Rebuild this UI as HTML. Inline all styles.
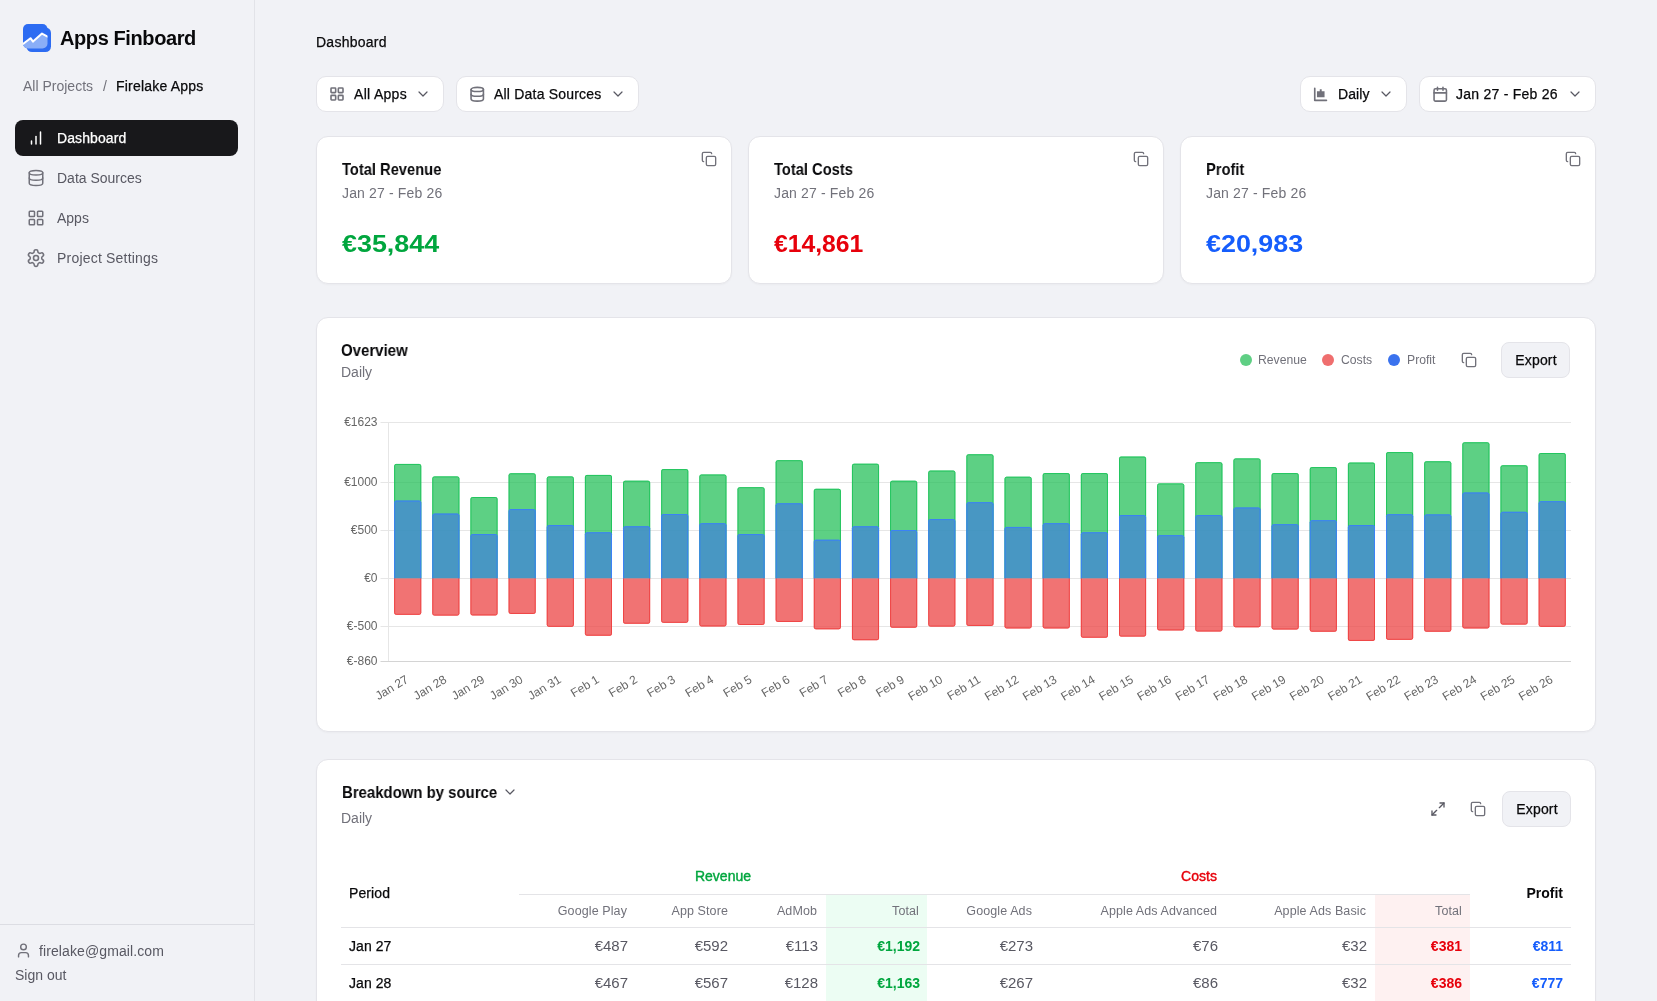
<!DOCTYPE html>
<html><head><meta charset="utf-8">
<style>
*{box-sizing:border-box;margin:0;padding:0}
html,body{width:1657px;height:1001px;overflow:hidden}
body{background:#f1f2f6;font-family:"Liberation Sans",sans-serif;color:#18181b;position:relative}
.t{position:absolute;white-space:nowrap;will-change:transform}
.side{position:absolute;left:0;top:0;width:255px;height:1001px;border-right:1px solid #e2e3e8}
.btn{position:absolute;top:76px;height:36px;background:#fff;border:1px solid #e4e4e9;border-radius:10px}
.card{position:absolute;background:#fff;border:1px solid #e4e4e9;border-radius:12px;box-shadow:0 1px 2px rgba(0,0,0,0.03)}
.chart{position:absolute;left:0;top:0;will-change:transform}
.tk{font-family:"Liberation Sans",sans-serif;font-size:12px;fill:#666}
.export{position:absolute;width:69px;height:36px;background:#f1f2f6;border:1px solid #e4e4e9;border-radius:8px}
</style></head><body>
<div class="side"></div>
<svg style="position:absolute;left:23px;top:24px" width="28" height="28" viewBox="0 0 28 28">
<defs><clipPath id="fc"><rect x="0" y="0" width="24.5" height="24.5" rx="5"/></clipPath></defs>
<rect x="3.5" y="3.5" width="24.5" height="24.5" rx="5.5" fill="#2d6cf2"/>
<rect x="0" y="0" width="24.5" height="24.5" rx="5" fill="#2d6cf2"/>
<path clip-path="url(#fc)" d="M-1,20.5 L7.5,14 L10,17.5 L19,9.5 L25,12.8 L25,26 L-1,26 Z" fill="#8aaef7"/>
<path clip-path="url(#fc)" d="M-1,20.8 L7.5,14.2 L10,17.6 L19,9.6 L25,12.9" fill="none" stroke="#fff" stroke-width="2" stroke-linejoin="round"/>
</svg>
<div class="t" style="top:28.37px;font-size:20px;line-height:20px;color:#09090b;font-weight:700;letter-spacing:-0.4px;left:59.50px">Apps Finboard</div>
<div class="t" style="top:78.95px;font-size:14px;line-height:14px;color:#71717a;font-weight:400;left:23.00px">All Projects</div>
<div class="t" style="top:78.95px;font-size:14px;line-height:14px;color:#71717a;font-weight:400;left:103.00px">/</div>
<div class="t" style="top:78.95px;font-size:14px;line-height:14px;color:#09090b;font-weight:400;letter-spacing:0.2px;-webkit-text-stroke:0.25px #09090b;left:115.50px">Firelake Apps</div>
<div style="position:absolute;left:15px;top:120px;width:223px;height:36px;border-radius:8px;background:#18181b"></div>
<svg style="position:absolute;left:27.00px;top:129.00px;color:#ffffff" width="18" height="18" viewBox="0 0 24 24" fill="none" stroke="currentColor" stroke-width="2" stroke-linecap="round" stroke-linejoin="round"><line x1="12" x2="12" y1="20" y2="10"/><line x1="18" x2="18" y1="20" y2="4"/><line x1="6" x2="6" y1="20" y2="16"/></svg>
<div class="t" style="top:130.55px;font-size:14px;line-height:14px;color:#ffffff;font-weight:400;letter-spacing:0.1px;-webkit-text-stroke:0.25px #ffffff;left:57.00px">Dashboard</div>
<svg style="position:absolute;left:26.90px;top:169.00px;color:#71717a" width="18" height="18" viewBox="0 0 24 24" fill="none" stroke="currentColor" stroke-width="2" stroke-linecap="round" stroke-linejoin="round"><ellipse cx="12" cy="5" rx="9" ry="3"/><path d="M3 5V19A9 3 0 0 0 21 19V5"/><path d="M3 12A9 3 0 0 0 21 12"/></svg>
<div class="t" style="top:171.15px;font-size:14px;line-height:14px;color:#585862;font-weight:400;left:57.00px">Data Sources</div>
<svg style="position:absolute;left:27.10px;top:209.00px;color:#71717a" width="18" height="18" viewBox="0 0 24 24" fill="none" stroke="currentColor" stroke-width="2" stroke-linecap="round" stroke-linejoin="round"><rect width="7" height="7" x="3" y="3" rx="1"/><rect width="7" height="7" x="14" y="3" rx="1"/><rect width="7" height="7" x="14" y="14" rx="1"/><rect width="7" height="7" x="3" y="14" rx="1"/></svg>
<div class="t" style="top:211.05px;font-size:14px;line-height:14px;color:#585862;font-weight:400;left:57.00px">Apps</div>
<svg style="position:absolute;left:26.00px;top:247.70px;color:#71717a" width="20" height="20" viewBox="0 0 24 24" fill="none" stroke="currentColor" stroke-width="1.9" stroke-linecap="round" stroke-linejoin="round"><path d="M12.22 2h-.44a2 2 0 0 0-2 2v.18a2 2 0 0 1-1 1.73l-.43.25a2 2 0 0 1-2 0l-.15-.08a2 2 0 0 0-2.73.73l-.22.38a2 2 0 0 0 .73 2.73l.15.1a2 2 0 0 1 1 1.72v.51a2 2 0 0 1-1 1.74l-.15.09a2 2 0 0 0-.73 2.73l.22.38a2 2 0 0 0 2.73.73l.15-.08a2 2 0 0 1 2 0l.43.25a2 2 0 0 1 1 1.73V20a2 2 0 0 0 2 2h.44a2 2 0 0 0 2-2v-.18a2 2 0 0 1 1-1.73l.43-.25a2 2 0 0 1 2 0l.15.08a2 2 0 0 0 2.73-.73l.22-.39a2 2 0 0 0-.73-2.73l-.15-.08a2 2 0 0 1-1-1.74v-.5a2 2 0 0 1 1-1.74l.15-.09a2 2 0 0 0 .73-2.73l-.22-.38a2 2 0 0 0-2.73-.73l-.15.08a2 2 0 0 1-2 0l-.43-.25a2 2 0 0 1-1-1.73V4a2 2 0 0 0-2-2z"/><circle cx="12" cy="12" r="3"/></svg>
<div class="t" style="top:251.15px;font-size:14px;line-height:14px;color:#585862;font-weight:400;letter-spacing:0.2px;left:57.00px">Project Settings</div>
<div style="position:absolute;left:0;top:924px;width:254px;height:1px;background:#dcdde3"></div>
<svg style="position:absolute;left:14.50px;top:942.30px;color:#71717a" width="17" height="17" viewBox="0 0 24 24" fill="none" stroke="currentColor" stroke-width="2" stroke-linecap="round" stroke-linejoin="round"><path d="M19 21v-2a4 4 0 0 0-4-4H9a4 4 0 0 0-4 4v2"/><circle cx="12" cy="7" r="4"/></svg>
<div class="t" style="top:944.15px;font-size:14px;line-height:14px;color:#585862;font-weight:400;letter-spacing:0.1px;left:39.00px">firelake@gmail.com</div>
<div class="t" style="top:968.15px;font-size:14px;line-height:14px;color:#585862;font-weight:400;left:15.00px">Sign out</div>
<div class="t" style="top:35.15px;font-size:14px;line-height:14px;color:#09090b;font-weight:400;letter-spacing:0.25px;-webkit-text-stroke:0.25px #09090b;left:316.00px">Dashboard</div>
<div class="btn" style="left:316px;width:128px"></div>
<svg style="position:absolute;left:329.00px;top:86.00px;color:#71717a" width="16" height="16" viewBox="0 0 24 24" fill="none" stroke="currentColor" stroke-width="2.4" stroke-linecap="round" stroke-linejoin="round"><rect width="7" height="7" x="3" y="3" rx="1"/><rect width="7" height="7" x="14" y="3" rx="1"/><rect width="7" height="7" x="14" y="14" rx="1"/><rect width="7" height="7" x="3" y="14" rx="1"/></svg>
<div class="t" style="top:87.05px;font-size:14px;line-height:14px;color:#09090b;font-weight:400;letter-spacing:0.3px;-webkit-text-stroke:0.25px #09090b;left:354.00px">All Apps</div>
<svg style="position:absolute;left:415.00px;top:86.00px;color:#585862" width="16" height="16" viewBox="0 0 24 24" fill="none" stroke="currentColor" stroke-width="1.8" stroke-linecap="round" stroke-linejoin="round"><path d="m6 9 6 6 6-6"/></svg>
<div class="btn" style="left:456px;width:183px"></div>
<svg style="position:absolute;left:468.75px;top:85.75px;color:#71717a" width="16.5" height="16.5" viewBox="0 0 24 24" fill="none" stroke="currentColor" stroke-width="2.3" stroke-linecap="round" stroke-linejoin="round"><ellipse cx="12" cy="5" rx="9" ry="3"/><path d="M3 5V19A9 3 0 0 0 21 19V5"/><path d="M3 12A9 3 0 0 0 21 12"/></svg>
<div class="t" style="top:87.05px;font-size:14px;line-height:14px;color:#09090b;font-weight:400;letter-spacing:0.2px;-webkit-text-stroke:0.25px #09090b;left:494.00px">All Data Sources</div>
<svg style="position:absolute;left:610.20px;top:86.00px;color:#585862" width="16" height="16" viewBox="0 0 24 24" fill="none" stroke="currentColor" stroke-width="1.8" stroke-linecap="round" stroke-linejoin="round"><path d="m6 9 6 6 6-6"/></svg>
<div class="btn" style="left:1300px;width:107px"></div>
<svg style="position:absolute;left:1312.25px;top:85.75px;color:#71717a" width="16.5" height="16.5" viewBox="0 0 24 24" fill="none" stroke="currentColor" stroke-width="2.3" stroke-linecap="round" stroke-linejoin="round"><path d="M4 3.2v17.8h17" stroke-width="2.4"/><path d="M7.2 7.8h4.1V4.7h2.8v3.1h4.15v8.6H7.2z" fill="currentColor" stroke="none"/></svg>
<div class="t" style="top:87.05px;font-size:14px;line-height:14px;color:#09090b;font-weight:400;letter-spacing:0.1px;-webkit-text-stroke:0.25px #09090b;left:1337.50px">Daily</div>
<svg style="position:absolute;left:1377.80px;top:86.00px;color:#585862" width="16" height="16" viewBox="0 0 24 24" fill="none" stroke="currentColor" stroke-width="1.8" stroke-linecap="round" stroke-linejoin="round"><path d="m6 9 6 6 6-6"/></svg>
<div class="btn" style="left:1419px;width:177px"></div>
<svg style="position:absolute;left:1431.75px;top:85.75px;color:#71717a" width="16.5" height="16.5" viewBox="0 0 24 24" fill="none" stroke="currentColor" stroke-width="2.3" stroke-linecap="round" stroke-linejoin="round"><rect width="18" height="18" x="3" y="4" rx="2"/><path d="M16 2v4"/><path d="M8 2v4"/><path d="M3 10h18"/></svg>
<div class="t" style="top:87.05px;font-size:14px;line-height:14px;color:#09090b;font-weight:400;letter-spacing:0.25px;-webkit-text-stroke:0.25px #09090b;left:1456.00px">Jan 27 - Feb 26</div>
<svg style="position:absolute;left:1566.90px;top:86.00px;color:#585862" width="16" height="16" viewBox="0 0 24 24" fill="none" stroke="currentColor" stroke-width="1.8" stroke-linecap="round" stroke-linejoin="round"><path d="m6 9 6 6 6-6"/></svg>
<div class="card" style="left:316px;top:136px;width:416px;height:148px"></div>
<div class="t" style="top:160.73px;font-size:16.5px;line-height:16.5px;color:#09090b;font-weight:700;transform:scaleX(0.89);transform-origin:0 0;left:341.50px">Total Revenue</div>
<div class="t" style="top:186.15px;font-size:14px;line-height:14px;color:#71717a;font-weight:400;letter-spacing:0.15px;left:341.50px">Jan 27 - Feb 26</div>
<div class="t" style="top:231.88px;font-size:24px;line-height:24px;color:#00a63e;font-weight:700;transform:scaleX(1.12);transform-origin:0 0;left:341.50px">€35,844</div>
<svg style="position:absolute;left:701.00px;top:151.00px;color:#71717a" width="16" height="16" viewBox="0 0 24 24" fill="none" stroke="currentColor" stroke-width="2" stroke-linecap="round" stroke-linejoin="round"><rect width="14" height="14" x="8" y="8" rx="2" ry="2"/><path d="M4 16c-1.1 0-2-.9-2-2V4c0-1.1.9-2 2-2h10c1.1 0 2 .9 2 2"/></svg>
<div class="card" style="left:748px;top:136px;width:416px;height:148px"></div>
<div class="t" style="top:160.73px;font-size:16.5px;line-height:16.5px;color:#09090b;font-weight:700;transform:scaleX(0.89);transform-origin:0 0;left:773.50px">Total Costs</div>
<div class="t" style="top:186.15px;font-size:14px;line-height:14px;color:#71717a;font-weight:400;letter-spacing:0.15px;left:773.50px">Jan 27 - Feb 26</div>
<div class="t" style="top:231.88px;font-size:24px;line-height:24px;color:#e7000b;font-weight:700;transform:scaleX(1.03);transform-origin:0 0;left:773.50px">€14,861</div>
<svg style="position:absolute;left:1133.00px;top:151.00px;color:#71717a" width="16" height="16" viewBox="0 0 24 24" fill="none" stroke="currentColor" stroke-width="2" stroke-linecap="round" stroke-linejoin="round"><rect width="14" height="14" x="8" y="8" rx="2" ry="2"/><path d="M4 16c-1.1 0-2-.9-2-2V4c0-1.1.9-2 2-2h10c1.1 0 2 .9 2 2"/></svg>
<div class="card" style="left:1180px;top:136px;width:416px;height:148px"></div>
<div class="t" style="top:160.73px;font-size:16.5px;line-height:16.5px;color:#09090b;font-weight:700;transform:scaleX(0.89);transform-origin:0 0;left:1205.50px">Profit</div>
<div class="t" style="top:186.15px;font-size:14px;line-height:14px;color:#71717a;font-weight:400;letter-spacing:0.15px;left:1205.50px">Jan 27 - Feb 26</div>
<div class="t" style="top:231.88px;font-size:24px;line-height:24px;color:#155dfc;font-weight:700;transform:scaleX(1.12);transform-origin:0 0;left:1205.50px">€20,983</div>
<svg style="position:absolute;left:1565.00px;top:151.00px;color:#71717a" width="16" height="16" viewBox="0 0 24 24" fill="none" stroke="currentColor" stroke-width="2" stroke-linecap="round" stroke-linejoin="round"><rect width="14" height="14" x="8" y="8" rx="2" ry="2"/><path d="M4 16c-1.1 0-2-.9-2-2V4c0-1.1.9-2 2-2h10c1.1 0 2 .9 2 2"/></svg>
<div class="card" style="left:316px;top:317px;width:1280px;height:415px"></div>
<div class="t" style="top:342.23px;font-size:16.5px;line-height:16.5px;color:#09090b;font-weight:700;transform:scaleX(0.91);transform-origin:0 0;left:341.00px">Overview</div>
<div class="t" style="top:364.95px;font-size:14px;line-height:14px;color:#71717a;font-weight:400;left:341.00px">Daily</div>
<div style="position:absolute;left:1239.9px;top:353.8px;width:12px;height:12px;border-radius:6px;background:#5fcf84"></div>
<div class="t" style="top:353.87px;font-size:12.2px;line-height:12.2px;color:#71717a;font-weight:400;left:1258.00px">Revenue</div>
<div style="position:absolute;left:1322.0px;top:353.8px;width:12px;height:12px;border-radius:6px;background:#ef6e6e"></div>
<div class="t" style="top:353.87px;font-size:12.2px;line-height:12.2px;color:#71717a;font-weight:400;left:1340.50px">Costs</div>
<div style="position:absolute;left:1387.9px;top:353.8px;width:12px;height:12px;border-radius:6px;background:#3a72ee"></div>
<div class="t" style="top:353.87px;font-size:12.2px;line-height:12.2px;color:#71717a;font-weight:400;left:1406.90px">Profit</div>
<svg style="position:absolute;left:1461.00px;top:351.80px;color:#71717a" width="16" height="16" viewBox="0 0 24 24" fill="none" stroke="currentColor" stroke-width="2" stroke-linecap="round" stroke-linejoin="round"><rect width="14" height="14" x="8" y="8" rx="2" ry="2"/><path d="M4 16c-1.1 0-2-.9-2-2V4c0-1.1.9-2 2-2h10c1.1 0 2 .9 2 2"/></svg>
<div class="export" style="left:1501px;top:342px"></div>
<div class="t" style="top:352.55px;font-size:14px;line-height:14px;color:#09090b;font-weight:400;letter-spacing:0.15px;-webkit-text-stroke:0.25px #09090b;left:1236.00px;width:600px;text-align:center">Export</div>
<div class="card" style="left:316px;top:759px;width:1280px;height:400px"></div>
<div class="t" style="top:783.93px;font-size:16.5px;line-height:16.5px;color:#09090b;font-weight:700;transform:scaleX(0.905);transform-origin:0 0;left:341.50px">Breakdown by source</div>
<svg style="position:absolute;left:502.00px;top:784.00px;color:#585862" width="16" height="16" viewBox="0 0 24 24" fill="none" stroke="currentColor" stroke-width="1.8" stroke-linecap="round" stroke-linejoin="round"><path d="m6 9 6 6 6-6"/></svg>
<div class="t" style="top:810.85px;font-size:14px;line-height:14px;color:#71717a;font-weight:400;left:341.00px">Daily</div>
<svg style="position:absolute;left:1430.20px;top:800.70px;color:#585862" width="16" height="16" viewBox="0 0 24 24" fill="none" stroke="currentColor" stroke-width="2" stroke-linecap="round" stroke-linejoin="round"><polyline points="15 3 21 3 21 9"/><polyline points="9 21 3 21 3 15"/><line x1="21" x2="14" y1="3" y2="10"/><line x1="3" x2="10" y1="21" y2="14"/></svg>
<svg style="position:absolute;left:1470.00px;top:801.00px;color:#71717a" width="16" height="16" viewBox="0 0 24 24" fill="none" stroke="currentColor" stroke-width="2" stroke-linecap="round" stroke-linejoin="round"><rect width="14" height="14" x="8" y="8" rx="2" ry="2"/><path d="M4 16c-1.1 0-2-.9-2-2V4c0-1.1.9-2 2-2h10c1.1 0 2 .9 2 2"/></svg>
<div class="export" style="left:1502px;top:791px"></div>
<div class="t" style="top:801.95px;font-size:14px;line-height:14px;color:#09090b;font-weight:400;letter-spacing:0.15px;-webkit-text-stroke:0.25px #09090b;left:1236.50px;width:600px;text-align:center">Export</div>
<div style="position:absolute;left:826px;top:894px;width:101px;height:120px;background:#ecfdf3"></div>
<div style="position:absolute;left:1375px;top:894px;width:95px;height:120px;background:#fef1f1"></div>
<div style="position:absolute;left:519px;top:894px;width:951px;height:1px;background:#e4e4e7"></div>
<div style="position:absolute;left:341px;top:927px;width:1230px;height:1px;background:#e4e4e7"></div>
<div style="position:absolute;left:341px;top:964px;width:1230px;height:1px;background:#e4e4e7"></div>
<div class="t" style="top:869.25px;font-size:14px;line-height:14px;color:#00a63e;font-weight:400;-webkit-text-stroke:0.4px #00a63e;left:423.30px;width:600px;text-align:center">Revenue</div>
<div class="t" style="top:869.25px;font-size:14px;line-height:14px;color:#e7000b;font-weight:400;-webkit-text-stroke:0.4px #e7000b;left:899.00px;width:600px;text-align:center">Costs</div>
<div class="t" style="top:886.45px;font-size:14px;line-height:14px;color:#09090b;font-weight:400;letter-spacing:0.1px;-webkit-text-stroke:0.25px #09090b;left:349.30px">Period</div>
<div class="t" style="top:886.35px;font-size:14px;line-height:14px;color:#09090b;font-weight:700;left:963.00px;width:600px;text-align:right">Profit</div>
<div class="t" style="top:904.82px;font-size:12.5px;line-height:12.5px;color:#71717a;font-weight:400;letter-spacing:0.1px;left:27.20px;width:600px;text-align:right">Google Play</div>
<div class="t" style="top:904.82px;font-size:12.5px;line-height:12.5px;color:#71717a;font-weight:400;letter-spacing:0.1px;left:127.70px;width:600px;text-align:right">App Store</div>
<div class="t" style="top:904.82px;font-size:12.5px;line-height:12.5px;color:#71717a;font-weight:400;letter-spacing:0.1px;left:217.30px;width:600px;text-align:right">AdMob</div>
<div class="t" style="top:904.82px;font-size:12.5px;line-height:12.5px;color:#71717a;font-weight:400;letter-spacing:0.1px;left:319.20px;width:600px;text-align:right">Total</div>
<div class="t" style="top:904.82px;font-size:12.5px;line-height:12.5px;color:#71717a;font-weight:400;letter-spacing:0.1px;left:432.00px;width:600px;text-align:right">Google Ads</div>
<div class="t" style="top:904.82px;font-size:12.5px;line-height:12.5px;color:#71717a;font-weight:400;letter-spacing:0.1px;left:617.20px;width:600px;text-align:right">Apple Ads Advanced</div>
<div class="t" style="top:904.82px;font-size:12.5px;line-height:12.5px;color:#71717a;font-weight:400;letter-spacing:0.1px;left:766.20px;width:600px;text-align:right">Apple Ads Basic</div>
<div class="t" style="top:904.82px;font-size:12.5px;line-height:12.5px;color:#71717a;font-weight:400;letter-spacing:0.1px;left:861.50px;width:600px;text-align:right">Total</div>
<div class="t" style="top:939.35px;font-size:14px;line-height:14px;color:#09090b;font-weight:400;letter-spacing:0.05px;-webkit-text-stroke:0.25px #09090b;left:349.30px">Jan 27</div>
<div class="t" style="top:939.35px;font-size:14px;line-height:14px;color:#585862;font-weight:400;transform:scaleX(1.07);transform-origin:100% 0;left:27.70px;width:600px;text-align:right">€487</div>
<div class="t" style="top:939.35px;font-size:14px;line-height:14px;color:#585862;font-weight:400;transform:scaleX(1.07);transform-origin:100% 0;left:128.20px;width:600px;text-align:right">€592</div>
<div class="t" style="top:939.35px;font-size:14px;line-height:14px;color:#585862;font-weight:400;transform:scaleX(1.07);transform-origin:100% 0;left:217.80px;width:600px;text-align:right">€113</div>
<div class="t" style="top:939.35px;font-size:14px;line-height:14px;color:#00a63e;font-weight:700;left:319.70px;width:600px;text-align:right">€1,192</div>
<div class="t" style="top:939.35px;font-size:14px;line-height:14px;color:#585862;font-weight:400;transform:scaleX(1.07);transform-origin:100% 0;left:432.50px;width:600px;text-align:right">€273</div>
<div class="t" style="top:939.35px;font-size:14px;line-height:14px;color:#585862;font-weight:400;transform:scaleX(1.07);transform-origin:100% 0;left:617.70px;width:600px;text-align:right">€76</div>
<div class="t" style="top:939.35px;font-size:14px;line-height:14px;color:#585862;font-weight:400;transform:scaleX(1.07);transform-origin:100% 0;left:766.70px;width:600px;text-align:right">€32</div>
<div class="t" style="top:939.35px;font-size:14px;line-height:14px;color:#e7000b;font-weight:700;left:862.00px;width:600px;text-align:right">€381</div>
<div class="t" style="top:939.35px;font-size:14px;line-height:14px;color:#155dfc;font-weight:700;left:963.00px;width:600px;text-align:right">€811</div>
<div class="t" style="top:976.45px;font-size:14px;line-height:14px;color:#09090b;font-weight:400;letter-spacing:0.05px;-webkit-text-stroke:0.25px #09090b;left:349.30px">Jan 28</div>
<div class="t" style="top:976.45px;font-size:14px;line-height:14px;color:#585862;font-weight:400;transform:scaleX(1.07);transform-origin:100% 0;left:27.70px;width:600px;text-align:right">€467</div>
<div class="t" style="top:976.45px;font-size:14px;line-height:14px;color:#585862;font-weight:400;transform:scaleX(1.07);transform-origin:100% 0;left:128.20px;width:600px;text-align:right">€567</div>
<div class="t" style="top:976.45px;font-size:14px;line-height:14px;color:#585862;font-weight:400;transform:scaleX(1.07);transform-origin:100% 0;left:217.80px;width:600px;text-align:right">€128</div>
<div class="t" style="top:976.45px;font-size:14px;line-height:14px;color:#00a63e;font-weight:700;left:319.70px;width:600px;text-align:right">€1,163</div>
<div class="t" style="top:976.45px;font-size:14px;line-height:14px;color:#585862;font-weight:400;transform:scaleX(1.07);transform-origin:100% 0;left:432.50px;width:600px;text-align:right">€267</div>
<div class="t" style="top:976.45px;font-size:14px;line-height:14px;color:#585862;font-weight:400;transform:scaleX(1.07);transform-origin:100% 0;left:617.70px;width:600px;text-align:right">€86</div>
<div class="t" style="top:976.45px;font-size:14px;line-height:14px;color:#585862;font-weight:400;transform:scaleX(1.07);transform-origin:100% 0;left:766.70px;width:600px;text-align:right">€32</div>
<div class="t" style="top:976.45px;font-size:14px;line-height:14px;color:#e7000b;font-weight:700;left:862.00px;width:600px;text-align:right">€386</div>
<div class="t" style="top:976.45px;font-size:14px;line-height:14px;color:#155dfc;font-weight:700;left:963.00px;width:600px;text-align:right">€777</div>
<svg class="chart" width="1657" height="1001" viewBox="0 0 1657 1001"><line x1="380.5" x2="1571" y1="422.5" y2="422.5" stroke="#e6e6e6" stroke-width="1"/><line x1="380.5" x2="1571" y1="482.5" y2="482.5" stroke="#e6e6e6" stroke-width="1"/><line x1="380.5" x2="1571" y1="530.5" y2="530.5" stroke="#e6e6e6" stroke-width="1"/><line x1="380.5" x2="1571" y1="578.5" y2="578.5" stroke="#e6e6e6" stroke-width="1"/><line x1="380.5" x2="1571" y1="626.5" y2="626.5" stroke="#e6e6e6" stroke-width="1"/><line x1="380.5" x2="1571" y1="661.5" y2="661.5" stroke="#d4d4d4" stroke-width="1"/><line x1="388.5" x2="388.5" y1="422" y2="661" stroke="#e6e6e6" stroke-width="1"/><text x="377.5" y="426.0" text-anchor="end" class="tk">€1623</text><text x="377.5" y="485.8" text-anchor="end" class="tk">€1000</text><text x="377.5" y="533.8" text-anchor="end" class="tk">€500</text><text x="377.5" y="582.0" text-anchor="end" class="tk">€0</text><text x="377.5" y="630.2" text-anchor="end" class="tk">€-500</text><text x="377.5" y="665.1" text-anchor="end" class="tk">€-860</text><path d="M394.15,578.30 L394.15,465.90 Q394.15,463.90 396.15,463.90 L419.25,463.90 Q421.25,463.90 421.25,465.90 L421.25,578.30 Z" fill="rgba(30,190,85,0.72)"/><path d="M394.65,578.30 L394.65,465.90 Q394.65,464.40 396.15,464.40 L419.25,464.40 Q420.75,464.40 420.75,465.90 L420.75,578.30" fill="none" stroke="#22c55e" stroke-width="1"/><path d="M394.15,578.30 L394.15,612.80 Q394.15,614.80 396.15,614.80 L419.25,614.80 Q421.25,614.80 421.25,612.80 L421.25,578.30 Z" fill="rgba(236,68,68,0.75)"/><path d="M394.65,578.30 L394.65,612.80 Q394.65,614.30 396.15,614.30 L419.25,614.30 Q420.75,614.30 420.75,612.80 L420.75,578.30" fill="none" stroke="#ef4444" stroke-width="1"/><path d="M394.15,578.30 L394.15,502.60 Q394.15,500.60 396.15,500.60 L419.25,500.60 Q421.25,500.60 421.25,502.60 L421.25,578.30 Z" fill="rgba(65,132,216,0.75)"/><path d="M394.65,578.30 L394.65,502.60 Q394.65,501.10 396.15,501.10 L419.25,501.10 Q420.75,501.10 420.75,502.60 L420.75,578.30" fill="none" stroke="#3b82f6" stroke-width="1"/><path d="M432.30,578.30 L432.30,478.40 Q432.30,476.40 434.30,476.40 L457.40,476.40 Q459.40,476.40 459.40,478.40 L459.40,578.30 Z" fill="rgba(30,190,85,0.72)"/><path d="M432.80,578.30 L432.80,478.40 Q432.80,476.90 434.30,476.90 L457.40,476.90 Q458.90,476.90 458.90,478.40 L458.90,578.30" fill="none" stroke="#22c55e" stroke-width="1"/><path d="M432.30,578.30 L432.30,613.60 Q432.30,615.60 434.30,615.60 L457.40,615.60 Q459.40,615.60 459.40,613.60 L459.40,578.30 Z" fill="rgba(236,68,68,0.75)"/><path d="M432.80,578.30 L432.80,613.60 Q432.80,615.10 434.30,615.10 L457.40,615.10 Q458.90,615.10 458.90,613.60 L458.90,578.30" fill="none" stroke="#ef4444" stroke-width="1"/><path d="M432.30,578.30 L432.30,515.60 Q432.30,513.60 434.30,513.60 L457.40,513.60 Q459.40,513.60 459.40,515.60 L459.40,578.30 Z" fill="rgba(65,132,216,0.75)"/><path d="M432.80,578.30 L432.80,515.60 Q432.80,514.10 434.30,514.10 L457.40,514.10 Q458.90,514.10 458.90,515.60 L458.90,578.30" fill="none" stroke="#3b82f6" stroke-width="1"/><path d="M470.45,578.30 L470.45,499.00 Q470.45,497.00 472.45,497.00 L495.55,497.00 Q497.55,497.00 497.55,499.00 L497.55,578.30 Z" fill="rgba(30,190,85,0.72)"/><path d="M470.95,578.30 L470.95,499.00 Q470.95,497.50 472.45,497.50 L495.55,497.50 Q497.05,497.50 497.05,499.00 L497.05,578.30" fill="none" stroke="#22c55e" stroke-width="1"/><path d="M470.45,578.30 L470.45,613.40 Q470.45,615.40 472.45,615.40 L495.55,615.40 Q497.55,615.40 497.55,613.40 L497.55,578.30 Z" fill="rgba(236,68,68,0.75)"/><path d="M470.95,578.30 L470.95,613.40 Q470.95,614.90 472.45,614.90 L495.55,614.90 Q497.05,614.90 497.05,613.40 L497.05,578.30" fill="none" stroke="#ef4444" stroke-width="1"/><path d="M470.45,578.30 L470.45,536.10 Q470.45,534.10 472.45,534.10 L495.55,534.10 Q497.55,534.10 497.55,536.10 L497.55,578.30 Z" fill="rgba(65,132,216,0.75)"/><path d="M470.95,578.30 L470.95,536.10 Q470.95,534.60 472.45,534.60 L495.55,534.60 Q497.05,534.60 497.05,536.10 L497.05,578.30" fill="none" stroke="#3b82f6" stroke-width="1"/><path d="M508.60,578.30 L508.60,475.30 Q508.60,473.30 510.60,473.30 L533.70,473.30 Q535.70,473.30 535.70,475.30 L535.70,578.30 Z" fill="rgba(30,190,85,0.72)"/><path d="M509.10,578.30 L509.10,475.30 Q509.10,473.80 510.60,473.80 L533.70,473.80 Q535.20,473.80 535.20,475.30 L535.20,578.30" fill="none" stroke="#22c55e" stroke-width="1"/><path d="M508.60,578.30 L508.60,611.90 Q508.60,613.90 510.60,613.90 L533.70,613.90 Q535.70,613.90 535.70,611.90 L535.70,578.30 Z" fill="rgba(236,68,68,0.75)"/><path d="M509.10,578.30 L509.10,611.90 Q509.10,613.40 510.60,613.40 L533.70,613.40 Q535.20,613.40 535.20,611.90 L535.20,578.30" fill="none" stroke="#ef4444" stroke-width="1"/><path d="M508.60,578.30 L508.60,511.10 Q508.60,509.10 510.60,509.10 L533.70,509.10 Q535.70,509.10 535.70,511.10 L535.70,578.30 Z" fill="rgba(65,132,216,0.75)"/><path d="M509.10,578.30 L509.10,511.10 Q509.10,509.60 510.60,509.60 L533.70,509.60 Q535.20,509.60 535.20,511.10 L535.20,578.30" fill="none" stroke="#3b82f6" stroke-width="1"/><path d="M546.75,578.30 L546.75,478.40 Q546.75,476.40 548.75,476.40 L571.85,476.40 Q573.85,476.40 573.85,478.40 L573.85,578.30 Z" fill="rgba(30,190,85,0.72)"/><path d="M547.25,578.30 L547.25,478.40 Q547.25,476.90 548.75,476.90 L571.85,476.90 Q573.35,476.90 573.35,478.40 L573.35,578.30" fill="none" stroke="#22c55e" stroke-width="1"/><path d="M546.75,578.30 L546.75,624.80 Q546.75,626.80 548.75,626.80 L571.85,626.80 Q573.85,626.80 573.85,624.80 L573.85,578.30 Z" fill="rgba(236,68,68,0.75)"/><path d="M547.25,578.30 L547.25,624.80 Q547.25,626.30 548.75,626.30 L571.85,626.30 Q573.35,626.30 573.35,624.80 L573.35,578.30" fill="none" stroke="#ef4444" stroke-width="1"/><path d="M546.75,578.30 L546.75,527.10 Q546.75,525.10 548.75,525.10 L571.85,525.10 Q573.85,525.10 573.85,527.10 L573.85,578.30 Z" fill="rgba(65,132,216,0.75)"/><path d="M547.25,578.30 L547.25,527.10 Q547.25,525.60 548.75,525.60 L571.85,525.60 Q573.35,525.60 573.35,527.10 L573.35,578.30" fill="none" stroke="#3b82f6" stroke-width="1"/><path d="M584.90,578.30 L584.90,476.90 Q584.90,474.90 586.90,474.90 L610.00,474.90 Q612.00,474.90 612.00,476.90 L612.00,578.30 Z" fill="rgba(30,190,85,0.72)"/><path d="M585.40,578.30 L585.40,476.90 Q585.40,475.40 586.90,475.40 L610.00,475.40 Q611.50,475.40 611.50,476.90 L611.50,578.30" fill="none" stroke="#22c55e" stroke-width="1"/><path d="M584.90,578.30 L584.90,633.70 Q584.90,635.70 586.90,635.70 L610.00,635.70 Q612.00,635.70 612.00,633.70 L612.00,578.30 Z" fill="rgba(236,68,68,0.75)"/><path d="M585.40,578.30 L585.40,633.70 Q585.40,635.20 586.90,635.20 L610.00,635.20 Q611.50,635.20 611.50,633.70 L611.50,578.30" fill="none" stroke="#ef4444" stroke-width="1"/><path d="M584.90,578.30 L584.90,534.30 Q584.90,532.30 586.90,532.30 L610.00,532.30 Q612.00,532.30 612.00,534.30 L612.00,578.30 Z" fill="rgba(65,132,216,0.75)"/><path d="M585.40,578.30 L585.40,534.30 Q585.40,532.80 586.90,532.80 L610.00,532.80 Q611.50,532.80 611.50,534.30 L611.50,578.30" fill="none" stroke="#3b82f6" stroke-width="1"/><path d="M623.05,578.30 L623.05,482.70 Q623.05,480.70 625.05,480.70 L648.15,480.70 Q650.15,480.70 650.15,482.70 L650.15,578.30 Z" fill="rgba(30,190,85,0.72)"/><path d="M623.55,578.30 L623.55,482.70 Q623.55,481.20 625.05,481.20 L648.15,481.20 Q649.65,481.20 649.65,482.70 L649.65,578.30" fill="none" stroke="#22c55e" stroke-width="1"/><path d="M623.05,578.30 L623.05,621.70 Q623.05,623.70 625.05,623.70 L648.15,623.70 Q650.15,623.70 650.15,621.70 L650.15,578.30 Z" fill="rgba(236,68,68,0.75)"/><path d="M623.55,578.30 L623.55,621.70 Q623.55,623.20 625.05,623.20 L648.15,623.20 Q649.65,623.20 649.65,621.70 L649.65,578.30" fill="none" stroke="#ef4444" stroke-width="1"/><path d="M623.05,578.30 L623.05,528.30 Q623.05,526.30 625.05,526.30 L648.15,526.30 Q650.15,526.30 650.15,528.30 L650.15,578.30 Z" fill="rgba(65,132,216,0.75)"/><path d="M623.55,578.30 L623.55,528.30 Q623.55,526.80 625.05,526.80 L648.15,526.80 Q649.65,526.80 649.65,528.30 L649.65,578.30" fill="none" stroke="#3b82f6" stroke-width="1"/><path d="M661.20,578.30 L661.20,471.10 Q661.20,469.10 663.20,469.10 L686.30,469.10 Q688.30,469.10 688.30,471.10 L688.30,578.30 Z" fill="rgba(30,190,85,0.72)"/><path d="M661.70,578.30 L661.70,471.10 Q661.70,469.60 663.20,469.60 L686.30,469.60 Q687.80,469.60 687.80,471.10 L687.80,578.30" fill="none" stroke="#22c55e" stroke-width="1"/><path d="M661.20,578.30 L661.20,620.80 Q661.20,622.80 663.20,622.80 L686.30,622.80 Q688.30,622.80 688.30,620.80 L688.30,578.30 Z" fill="rgba(236,68,68,0.75)"/><path d="M661.70,578.30 L661.70,620.80 Q661.70,622.30 663.20,622.30 L686.30,622.30 Q687.80,622.30 687.80,620.80 L687.80,578.30" fill="none" stroke="#ef4444" stroke-width="1"/><path d="M661.20,578.30 L661.20,516.00 Q661.20,514.00 663.20,514.00 L686.30,514.00 Q688.30,514.00 688.30,516.00 L688.30,578.30 Z" fill="rgba(65,132,216,0.75)"/><path d="M661.70,578.30 L661.70,516.00 Q661.70,514.50 663.20,514.50 L686.30,514.50 Q687.80,514.50 687.80,516.00 L687.80,578.30" fill="none" stroke="#3b82f6" stroke-width="1"/><path d="M699.35,578.30 L699.35,476.50 Q699.35,474.50 701.35,474.50 L724.45,474.50 Q726.45,474.50 726.45,476.50 L726.45,578.30 Z" fill="rgba(30,190,85,0.72)"/><path d="M699.85,578.30 L699.85,476.50 Q699.85,475.00 701.35,475.00 L724.45,475.00 Q725.95,475.00 725.95,476.50 L725.95,578.30" fill="none" stroke="#22c55e" stroke-width="1"/><path d="M699.35,578.30 L699.35,624.40 Q699.35,626.40 701.35,626.40 L724.45,626.40 Q726.45,626.40 726.45,624.40 L726.45,578.30 Z" fill="rgba(236,68,68,0.75)"/><path d="M699.85,578.30 L699.85,624.40 Q699.85,625.90 701.35,625.90 L724.45,625.90 Q725.95,625.90 725.95,624.40 L725.95,578.30" fill="none" stroke="#ef4444" stroke-width="1"/><path d="M699.35,578.30 L699.35,525.20 Q699.35,523.20 701.35,523.20 L724.45,523.20 Q726.45,523.20 726.45,525.20 L726.45,578.30 Z" fill="rgba(65,132,216,0.75)"/><path d="M699.85,578.30 L699.85,525.20 Q699.85,523.70 701.35,523.70 L724.45,523.70 Q725.95,523.70 725.95,525.20 L725.95,578.30" fill="none" stroke="#3b82f6" stroke-width="1"/><path d="M737.50,578.30 L737.50,489.20 Q737.50,487.20 739.50,487.20 L762.60,487.20 Q764.60,487.20 764.60,489.20 L764.60,578.30 Z" fill="rgba(30,190,85,0.72)"/><path d="M738.00,578.30 L738.00,489.20 Q738.00,487.70 739.50,487.70 L762.60,487.70 Q764.10,487.70 764.10,489.20 L764.10,578.30" fill="none" stroke="#22c55e" stroke-width="1"/><path d="M737.50,578.30 L737.50,623.00 Q737.50,625.00 739.50,625.00 L762.60,625.00 Q764.60,625.00 764.60,623.00 L764.60,578.30 Z" fill="rgba(236,68,68,0.75)"/><path d="M738.00,578.30 L738.00,623.00 Q738.00,624.50 739.50,624.50 L762.60,624.50 Q764.10,624.50 764.10,623.00 L764.10,578.30" fill="none" stroke="#ef4444" stroke-width="1"/><path d="M737.50,578.30 L737.50,536.10 Q737.50,534.10 739.50,534.10 L762.60,534.10 Q764.60,534.10 764.60,536.10 L764.60,578.30 Z" fill="rgba(65,132,216,0.75)"/><path d="M738.00,578.30 L738.00,536.10 Q738.00,534.60 739.50,534.60 L762.60,534.60 Q764.10,534.60 764.10,536.10 L764.10,578.30" fill="none" stroke="#3b82f6" stroke-width="1"/><path d="M775.65,578.30 L775.65,462.20 Q775.65,460.20 777.65,460.20 L800.75,460.20 Q802.75,460.20 802.75,462.20 L802.75,578.30 Z" fill="rgba(30,190,85,0.72)"/><path d="M776.15,578.30 L776.15,462.20 Q776.15,460.70 777.65,460.70 L800.75,460.70 Q802.25,460.70 802.25,462.20 L802.25,578.30" fill="none" stroke="#22c55e" stroke-width="1"/><path d="M775.65,578.30 L775.65,619.90 Q775.65,621.90 777.65,621.90 L800.75,621.90 Q802.75,621.90 802.75,619.90 L802.75,578.30 Z" fill="rgba(236,68,68,0.75)"/><path d="M776.15,578.30 L776.15,619.90 Q776.15,621.40 777.65,621.40 L800.75,621.40 Q802.25,621.40 802.25,619.90 L802.25,578.30" fill="none" stroke="#ef4444" stroke-width="1"/><path d="M775.65,578.30 L775.65,505.30 Q775.65,503.30 777.65,503.30 L800.75,503.30 Q802.75,503.30 802.75,505.30 L802.75,578.30 Z" fill="rgba(65,132,216,0.75)"/><path d="M776.15,578.30 L776.15,505.30 Q776.15,503.80 777.65,503.80 L800.75,503.80 Q802.25,503.80 802.25,505.30 L802.25,578.30" fill="none" stroke="#3b82f6" stroke-width="1"/><path d="M813.80,578.30 L813.80,490.80 Q813.80,488.80 815.80,488.80 L838.90,488.80 Q840.90,488.80 840.90,490.80 L840.90,578.30 Z" fill="rgba(30,190,85,0.72)"/><path d="M814.30,578.30 L814.30,490.80 Q814.30,489.30 815.80,489.30 L838.90,489.30 Q840.40,489.30 840.40,490.80 L840.40,578.30" fill="none" stroke="#22c55e" stroke-width="1"/><path d="M813.80,578.30 L813.80,627.30 Q813.80,629.30 815.80,629.30 L838.90,629.30 Q840.90,629.30 840.90,627.30 L840.90,578.30 Z" fill="rgba(236,68,68,0.75)"/><path d="M814.30,578.30 L814.30,627.30 Q814.30,628.80 815.80,628.80 L838.90,628.80 Q840.40,628.80 840.40,627.30 L840.40,578.30" fill="none" stroke="#ef4444" stroke-width="1"/><path d="M813.80,578.30 L813.80,541.70 Q813.80,539.70 815.80,539.70 L838.90,539.70 Q840.90,539.70 840.90,541.70 L840.90,578.30 Z" fill="rgba(65,132,216,0.75)"/><path d="M814.30,578.30 L814.30,541.70 Q814.30,540.20 815.80,540.20 L838.90,540.20 Q840.40,540.20 840.40,541.70 L840.40,578.30" fill="none" stroke="#3b82f6" stroke-width="1"/><path d="M851.95,578.30 L851.95,465.70 Q851.95,463.70 853.95,463.70 L877.05,463.70 Q879.05,463.70 879.05,465.70 L879.05,578.30 Z" fill="rgba(30,190,85,0.72)"/><path d="M852.45,578.30 L852.45,465.70 Q852.45,464.20 853.95,464.20 L877.05,464.20 Q878.55,464.20 878.55,465.70 L878.55,578.30" fill="none" stroke="#22c55e" stroke-width="1"/><path d="M851.95,578.30 L851.95,638.20 Q851.95,640.20 853.95,640.20 L877.05,640.20 Q879.05,640.20 879.05,638.20 L879.05,578.30 Z" fill="rgba(236,68,68,0.75)"/><path d="M852.45,578.30 L852.45,638.20 Q852.45,639.70 853.95,639.70 L877.05,639.70 Q878.55,639.70 878.55,638.20 L878.55,578.30" fill="none" stroke="#ef4444" stroke-width="1"/><path d="M851.95,578.30 L851.95,528.30 Q851.95,526.30 853.95,526.30 L877.05,526.30 Q879.05,526.30 879.05,528.30 L879.05,578.30 Z" fill="rgba(65,132,216,0.75)"/><path d="M852.45,578.30 L852.45,528.30 Q852.45,526.80 853.95,526.80 L877.05,526.80 Q878.55,526.80 878.55,528.30 L878.55,578.30" fill="none" stroke="#3b82f6" stroke-width="1"/><path d="M890.10,578.30 L890.10,482.70 Q890.10,480.70 892.10,480.70 L915.20,480.70 Q917.20,480.70 917.20,482.70 L917.20,578.30 Z" fill="rgba(30,190,85,0.72)"/><path d="M890.60,578.30 L890.60,482.70 Q890.60,481.20 892.10,481.20 L915.20,481.20 Q916.70,481.20 916.70,482.70 L916.70,578.30" fill="none" stroke="#22c55e" stroke-width="1"/><path d="M890.10,578.30 L890.10,625.70 Q890.10,627.70 892.10,627.70 L915.20,627.70 Q917.20,627.70 917.20,625.70 L917.20,578.30 Z" fill="rgba(236,68,68,0.75)"/><path d="M890.60,578.30 L890.60,625.70 Q890.60,627.20 892.10,627.20 L915.20,627.20 Q916.70,627.20 916.70,625.70 L916.70,578.30" fill="none" stroke="#ef4444" stroke-width="1"/><path d="M890.10,578.30 L890.10,532.00 Q890.10,530.00 892.10,530.00 L915.20,530.00 Q917.20,530.00 917.20,532.00 L917.20,578.30 Z" fill="rgba(65,132,216,0.75)"/><path d="M890.60,578.30 L890.60,532.00 Q890.60,530.50 892.10,530.50 L915.20,530.50 Q916.70,530.50 916.70,532.00 L916.70,578.30" fill="none" stroke="#3b82f6" stroke-width="1"/><path d="M928.25,578.30 L928.25,472.60 Q928.25,470.60 930.25,470.60 L953.35,470.60 Q955.35,470.60 955.35,472.60 L955.35,578.30 Z" fill="rgba(30,190,85,0.72)"/><path d="M928.75,578.30 L928.75,472.60 Q928.75,471.10 930.25,471.10 L953.35,471.10 Q954.85,471.10 954.85,472.60 L954.85,578.30" fill="none" stroke="#22c55e" stroke-width="1"/><path d="M928.25,578.30 L928.25,624.60 Q928.25,626.60 930.25,626.60 L953.35,626.60 Q955.35,626.60 955.35,624.60 L955.35,578.30 Z" fill="rgba(236,68,68,0.75)"/><path d="M928.75,578.30 L928.75,624.60 Q928.75,626.10 930.25,626.10 L953.35,626.10 Q954.85,626.10 954.85,624.60 L954.85,578.30" fill="none" stroke="#ef4444" stroke-width="1"/><path d="M928.25,578.30 L928.25,521.10 Q928.25,519.10 930.25,519.10 L953.35,519.10 Q955.35,519.10 955.35,521.10 L955.35,578.30 Z" fill="rgba(65,132,216,0.75)"/><path d="M928.75,578.30 L928.75,521.10 Q928.75,519.60 930.25,519.60 L953.35,519.60 Q954.85,519.60 954.85,521.10 L954.85,578.30" fill="none" stroke="#3b82f6" stroke-width="1"/><path d="M966.40,578.30 L966.40,456.30 Q966.40,454.30 968.40,454.30 L991.50,454.30 Q993.50,454.30 993.50,456.30 L993.50,578.30 Z" fill="rgba(30,190,85,0.72)"/><path d="M966.90,578.30 L966.90,456.30 Q966.90,454.80 968.40,454.80 L991.50,454.80 Q993.00,454.80 993.00,456.30 L993.00,578.30" fill="none" stroke="#22c55e" stroke-width="1"/><path d="M966.40,578.30 L966.40,623.90 Q966.40,625.90 968.40,625.90 L991.50,625.90 Q993.50,625.90 993.50,623.90 L993.50,578.30 Z" fill="rgba(236,68,68,0.75)"/><path d="M966.90,578.30 L966.90,623.90 Q966.90,625.40 968.40,625.40 L991.50,625.40 Q993.00,625.40 993.00,623.90 L993.00,578.30" fill="none" stroke="#ef4444" stroke-width="1"/><path d="M966.40,578.30 L966.40,504.20 Q966.40,502.20 968.40,502.20 L991.50,502.20 Q993.50,502.20 993.50,504.20 L993.50,578.30 Z" fill="rgba(65,132,216,0.75)"/><path d="M966.90,578.30 L966.90,504.20 Q966.90,502.70 968.40,502.70 L991.50,502.70 Q993.00,502.70 993.00,504.20 L993.00,578.30" fill="none" stroke="#3b82f6" stroke-width="1"/><path d="M1004.55,578.30 L1004.55,478.70 Q1004.55,476.70 1006.55,476.70 L1029.65,476.70 Q1031.65,476.70 1031.65,478.70 L1031.65,578.30 Z" fill="rgba(30,190,85,0.72)"/><path d="M1005.05,578.30 L1005.05,478.70 Q1005.05,477.20 1006.55,477.20 L1029.65,477.20 Q1031.15,477.20 1031.15,478.70 L1031.15,578.30" fill="none" stroke="#22c55e" stroke-width="1"/><path d="M1004.55,578.30 L1004.55,626.40 Q1004.55,628.40 1006.55,628.40 L1029.65,628.40 Q1031.65,628.40 1031.65,626.40 L1031.65,578.30 Z" fill="rgba(236,68,68,0.75)"/><path d="M1005.05,578.30 L1005.05,626.40 Q1005.05,627.90 1006.55,627.90 L1029.65,627.90 Q1031.15,627.90 1031.15,626.40 L1031.15,578.30" fill="none" stroke="#ef4444" stroke-width="1"/><path d="M1004.55,578.30 L1004.55,528.90 Q1004.55,526.90 1006.55,526.90 L1029.65,526.90 Q1031.65,526.90 1031.65,528.90 L1031.65,578.30 Z" fill="rgba(65,132,216,0.75)"/><path d="M1005.05,578.30 L1005.05,528.90 Q1005.05,527.40 1006.55,527.40 L1029.65,527.40 Q1031.15,527.40 1031.15,528.90 L1031.15,578.30" fill="none" stroke="#3b82f6" stroke-width="1"/><path d="M1042.70,578.30 L1042.70,475.10 Q1042.70,473.10 1044.70,473.10 L1067.80,473.10 Q1069.80,473.10 1069.80,475.10 L1069.80,578.30 Z" fill="rgba(30,190,85,0.72)"/><path d="M1043.20,578.30 L1043.20,475.10 Q1043.20,473.60 1044.70,473.60 L1067.80,473.60 Q1069.30,473.60 1069.30,475.10 L1069.30,578.30" fill="none" stroke="#22c55e" stroke-width="1"/><path d="M1042.70,578.30 L1042.70,626.40 Q1042.70,628.40 1044.70,628.40 L1067.80,628.40 Q1069.80,628.40 1069.80,626.40 L1069.80,578.30 Z" fill="rgba(236,68,68,0.75)"/><path d="M1043.20,578.30 L1043.20,626.40 Q1043.20,627.90 1044.70,627.90 L1067.80,627.90 Q1069.30,627.90 1069.30,626.40 L1069.30,578.30" fill="none" stroke="#ef4444" stroke-width="1"/><path d="M1042.70,578.30 L1042.70,525.20 Q1042.70,523.20 1044.70,523.20 L1067.80,523.20 Q1069.80,523.20 1069.80,525.20 L1069.80,578.30 Z" fill="rgba(65,132,216,0.75)"/><path d="M1043.20,578.30 L1043.20,525.20 Q1043.20,523.70 1044.70,523.70 L1067.80,523.70 Q1069.30,523.70 1069.30,525.20 L1069.30,578.30" fill="none" stroke="#3b82f6" stroke-width="1"/><path d="M1080.85,578.30 L1080.85,475.10 Q1080.85,473.10 1082.85,473.10 L1105.95,473.10 Q1107.95,473.10 1107.95,475.10 L1107.95,578.30 Z" fill="rgba(30,190,85,0.72)"/><path d="M1081.35,578.30 L1081.35,475.10 Q1081.35,473.60 1082.85,473.60 L1105.95,473.60 Q1107.45,473.60 1107.45,475.10 L1107.45,578.30" fill="none" stroke="#22c55e" stroke-width="1"/><path d="M1080.85,578.30 L1080.85,635.70 Q1080.85,637.70 1082.85,637.70 L1105.95,637.70 Q1107.95,637.70 1107.95,635.70 L1107.95,578.30 Z" fill="rgba(236,68,68,0.75)"/><path d="M1081.35,578.30 L1081.35,635.70 Q1081.35,637.20 1082.85,637.20 L1105.95,637.20 Q1107.45,637.20 1107.45,635.70 L1107.45,578.30" fill="none" stroke="#ef4444" stroke-width="1"/><path d="M1080.85,578.30 L1080.85,534.30 Q1080.85,532.30 1082.85,532.30 L1105.95,532.30 Q1107.95,532.30 1107.95,534.30 L1107.95,578.30 Z" fill="rgba(65,132,216,0.75)"/><path d="M1081.35,578.30 L1081.35,534.30 Q1081.35,532.80 1082.85,532.80 L1105.95,532.80 Q1107.45,532.80 1107.45,534.30 L1107.45,578.30" fill="none" stroke="#3b82f6" stroke-width="1"/><path d="M1119.00,578.30 L1119.00,458.60 Q1119.00,456.60 1121.00,456.60 L1144.10,456.60 Q1146.10,456.60 1146.10,458.60 L1146.10,578.30 Z" fill="rgba(30,190,85,0.72)"/><path d="M1119.50,578.30 L1119.50,458.60 Q1119.50,457.10 1121.00,457.10 L1144.10,457.10 Q1145.60,457.10 1145.60,458.60 L1145.60,578.30" fill="none" stroke="#22c55e" stroke-width="1"/><path d="M1119.00,578.30 L1119.00,634.60 Q1119.00,636.60 1121.00,636.60 L1144.10,636.60 Q1146.10,636.60 1146.10,634.60 L1146.10,578.30 Z" fill="rgba(236,68,68,0.75)"/><path d="M1119.50,578.30 L1119.50,634.60 Q1119.50,636.10 1121.00,636.10 L1144.10,636.10 Q1145.60,636.10 1145.60,634.60 L1145.60,578.30" fill="none" stroke="#ef4444" stroke-width="1"/><path d="M1119.00,578.30 L1119.00,517.10 Q1119.00,515.10 1121.00,515.10 L1144.10,515.10 Q1146.10,515.10 1146.10,517.10 L1146.10,578.30 Z" fill="rgba(65,132,216,0.75)"/><path d="M1119.50,578.30 L1119.50,517.10 Q1119.50,515.60 1121.00,515.60 L1144.10,515.60 Q1145.60,515.60 1145.60,517.10 L1145.60,578.30" fill="none" stroke="#3b82f6" stroke-width="1"/><path d="M1157.15,578.30 L1157.15,485.40 Q1157.15,483.40 1159.15,483.40 L1182.25,483.40 Q1184.25,483.40 1184.25,485.40 L1184.25,578.30 Z" fill="rgba(30,190,85,0.72)"/><path d="M1157.65,578.30 L1157.65,485.40 Q1157.65,483.90 1159.15,483.90 L1182.25,483.90 Q1183.75,483.90 1183.75,485.40 L1183.75,578.30" fill="none" stroke="#22c55e" stroke-width="1"/><path d="M1157.15,578.30 L1157.15,628.40 Q1157.15,630.40 1159.15,630.40 L1182.25,630.40 Q1184.25,630.40 1184.25,628.40 L1184.25,578.30 Z" fill="rgba(236,68,68,0.75)"/><path d="M1157.65,578.30 L1157.65,628.40 Q1157.65,629.90 1159.15,629.90 L1182.25,629.90 Q1183.75,629.90 1183.75,628.40 L1183.75,578.30" fill="none" stroke="#ef4444" stroke-width="1"/><path d="M1157.15,578.30 L1157.15,537.20 Q1157.15,535.20 1159.15,535.20 L1182.25,535.20 Q1184.25,535.20 1184.25,537.20 L1184.25,578.30 Z" fill="rgba(65,132,216,0.75)"/><path d="M1157.65,578.30 L1157.65,537.20 Q1157.65,535.70 1159.15,535.70 L1182.25,535.70 Q1183.75,535.70 1183.75,537.20 L1183.75,578.30" fill="none" stroke="#3b82f6" stroke-width="1"/><path d="M1195.30,578.30 L1195.30,464.20 Q1195.30,462.20 1197.30,462.20 L1220.40,462.20 Q1222.40,462.20 1222.40,464.20 L1222.40,578.30 Z" fill="rgba(30,190,85,0.72)"/><path d="M1195.80,578.30 L1195.80,464.20 Q1195.80,462.70 1197.30,462.70 L1220.40,462.70 Q1221.90,462.70 1221.90,464.20 L1221.90,578.30" fill="none" stroke="#22c55e" stroke-width="1"/><path d="M1195.30,578.30 L1195.30,629.50 Q1195.30,631.50 1197.30,631.50 L1220.40,631.50 Q1222.40,631.50 1222.40,629.50 L1222.40,578.30 Z" fill="rgba(236,68,68,0.75)"/><path d="M1195.80,578.30 L1195.80,629.50 Q1195.80,631.00 1197.30,631.00 L1220.40,631.00 Q1221.90,631.00 1221.90,629.50 L1221.90,578.30" fill="none" stroke="#ef4444" stroke-width="1"/><path d="M1195.30,578.30 L1195.30,517.10 Q1195.30,515.10 1197.30,515.10 L1220.40,515.10 Q1222.40,515.10 1222.40,517.10 L1222.40,578.30 Z" fill="rgba(65,132,216,0.75)"/><path d="M1195.80,578.30 L1195.80,517.10 Q1195.80,515.60 1197.30,515.60 L1220.40,515.60 Q1221.90,515.60 1221.90,517.10 L1221.90,578.30" fill="none" stroke="#3b82f6" stroke-width="1"/><path d="M1233.45,578.30 L1233.45,460.40 Q1233.45,458.40 1235.45,458.40 L1258.55,458.40 Q1260.55,458.40 1260.55,460.40 L1260.55,578.30 Z" fill="rgba(30,190,85,0.72)"/><path d="M1233.95,578.30 L1233.95,460.40 Q1233.95,458.90 1235.45,458.90 L1258.55,458.90 Q1260.05,458.90 1260.05,460.40 L1260.05,578.30" fill="none" stroke="#22c55e" stroke-width="1"/><path d="M1233.45,578.30 L1233.45,625.30 Q1233.45,627.30 1235.45,627.30 L1258.55,627.30 Q1260.55,627.30 1260.55,625.30 L1260.55,578.30 Z" fill="rgba(236,68,68,0.75)"/><path d="M1233.95,578.30 L1233.95,625.30 Q1233.95,626.80 1235.45,626.80 L1258.55,626.80 Q1260.05,626.80 1260.05,625.30 L1260.05,578.30" fill="none" stroke="#ef4444" stroke-width="1"/><path d="M1233.45,578.30 L1233.45,509.50 Q1233.45,507.50 1235.45,507.50 L1258.55,507.50 Q1260.55,507.50 1260.55,509.50 L1260.55,578.30 Z" fill="rgba(65,132,216,0.75)"/><path d="M1233.95,578.30 L1233.95,509.50 Q1233.95,508.00 1235.45,508.00 L1258.55,508.00 Q1260.05,508.00 1260.05,509.50 L1260.05,578.30" fill="none" stroke="#3b82f6" stroke-width="1"/><path d="M1271.60,578.30 L1271.60,475.10 Q1271.60,473.10 1273.60,473.10 L1296.70,473.10 Q1298.70,473.10 1298.70,475.10 L1298.70,578.30 Z" fill="rgba(30,190,85,0.72)"/><path d="M1272.10,578.30 L1272.10,475.10 Q1272.10,473.60 1273.60,473.60 L1296.70,473.60 Q1298.20,473.60 1298.20,475.10 L1298.20,578.30" fill="none" stroke="#22c55e" stroke-width="1"/><path d="M1271.60,578.30 L1271.60,627.50 Q1271.60,629.50 1273.60,629.50 L1296.70,629.50 Q1298.70,629.50 1298.70,627.50 L1298.70,578.30 Z" fill="rgba(236,68,68,0.75)"/><path d="M1272.10,578.30 L1272.10,627.50 Q1272.10,629.00 1273.60,629.00 L1296.70,629.00 Q1298.20,629.00 1298.20,627.50 L1298.20,578.30" fill="none" stroke="#ef4444" stroke-width="1"/><path d="M1271.60,578.30 L1271.60,526.20 Q1271.60,524.20 1273.60,524.20 L1296.70,524.20 Q1298.70,524.20 1298.70,526.20 L1298.70,578.30 Z" fill="rgba(65,132,216,0.75)"/><path d="M1272.10,578.30 L1272.10,526.20 Q1272.10,524.70 1273.60,524.70 L1296.70,524.70 Q1298.20,524.70 1298.20,526.20 L1298.20,578.30" fill="none" stroke="#3b82f6" stroke-width="1"/><path d="M1309.75,578.30 L1309.75,469.10 Q1309.75,467.10 1311.75,467.10 L1334.85,467.10 Q1336.85,467.10 1336.85,469.10 L1336.85,578.30 Z" fill="rgba(30,190,85,0.72)"/><path d="M1310.25,578.30 L1310.25,469.10 Q1310.25,467.60 1311.75,467.60 L1334.85,467.60 Q1336.35,467.60 1336.35,469.10 L1336.35,578.30" fill="none" stroke="#22c55e" stroke-width="1"/><path d="M1309.75,578.30 L1309.75,629.70 Q1309.75,631.70 1311.75,631.70 L1334.85,631.70 Q1336.85,631.70 1336.85,629.70 L1336.85,578.30 Z" fill="rgba(236,68,68,0.75)"/><path d="M1310.25,578.30 L1310.25,629.70 Q1310.25,631.20 1311.75,631.20 L1334.85,631.20 Q1336.35,631.20 1336.35,629.70 L1336.35,578.30" fill="none" stroke="#ef4444" stroke-width="1"/><path d="M1309.75,578.30 L1309.75,522.20 Q1309.75,520.20 1311.75,520.20 L1334.85,520.20 Q1336.85,520.20 1336.85,522.20 L1336.85,578.30 Z" fill="rgba(65,132,216,0.75)"/><path d="M1310.25,578.30 L1310.25,522.20 Q1310.25,520.70 1311.75,520.70 L1334.85,520.70 Q1336.35,520.70 1336.35,522.20 L1336.35,578.30" fill="none" stroke="#3b82f6" stroke-width="1"/><path d="M1347.90,578.30 L1347.90,464.60 Q1347.90,462.60 1349.90,462.60 L1373.00,462.60 Q1375.00,462.60 1375.00,464.60 L1375.00,578.30 Z" fill="rgba(30,190,85,0.72)"/><path d="M1348.40,578.30 L1348.40,464.60 Q1348.40,463.10 1349.90,463.10 L1373.00,463.10 Q1374.50,463.10 1374.50,464.60 L1374.50,578.30" fill="none" stroke="#22c55e" stroke-width="1"/><path d="M1347.90,578.30 L1347.90,638.90 Q1347.90,640.90 1349.90,640.90 L1373.00,640.90 Q1375.00,640.90 1375.00,638.90 L1375.00,578.30 Z" fill="rgba(236,68,68,0.75)"/><path d="M1348.40,578.30 L1348.40,638.90 Q1348.40,640.40 1349.90,640.40 L1373.00,640.40 Q1374.50,640.40 1374.50,638.90 L1374.50,578.30" fill="none" stroke="#ef4444" stroke-width="1"/><path d="M1347.90,578.30 L1347.90,527.10 Q1347.90,525.10 1349.90,525.10 L1373.00,525.10 Q1375.00,525.10 1375.00,527.10 L1375.00,578.30 Z" fill="rgba(65,132,216,0.75)"/><path d="M1348.40,578.30 L1348.40,527.10 Q1348.40,525.60 1349.90,525.60 L1373.00,525.60 Q1374.50,525.60 1374.50,527.10 L1374.50,578.30" fill="none" stroke="#3b82f6" stroke-width="1"/><path d="M1386.05,578.30 L1386.05,454.10 Q1386.05,452.10 1388.05,452.10 L1411.15,452.10 Q1413.15,452.10 1413.15,454.10 L1413.15,578.30 Z" fill="rgba(30,190,85,0.72)"/><path d="M1386.55,578.30 L1386.55,454.10 Q1386.55,452.60 1388.05,452.60 L1411.15,452.60 Q1412.65,452.60 1412.65,454.10 L1412.65,578.30" fill="none" stroke="#22c55e" stroke-width="1"/><path d="M1386.05,578.30 L1386.05,637.80 Q1386.05,639.80 1388.05,639.80 L1411.15,639.80 Q1413.15,639.80 1413.15,637.80 L1413.15,578.30 Z" fill="rgba(236,68,68,0.75)"/><path d="M1386.55,578.30 L1386.55,637.80 Q1386.55,639.30 1388.05,639.30 L1411.15,639.30 Q1412.65,639.30 1412.65,637.80 L1412.65,578.30" fill="none" stroke="#ef4444" stroke-width="1"/><path d="M1386.05,578.30 L1386.05,516.20 Q1386.05,514.20 1388.05,514.20 L1411.15,514.20 Q1413.15,514.20 1413.15,516.20 L1413.15,578.30 Z" fill="rgba(65,132,216,0.75)"/><path d="M1386.55,578.30 L1386.55,516.20 Q1386.55,514.70 1388.05,514.70 L1411.15,514.70 Q1412.65,514.70 1412.65,516.20 L1412.65,578.30" fill="none" stroke="#3b82f6" stroke-width="1"/><path d="M1424.20,578.30 L1424.20,463.30 Q1424.20,461.30 1426.20,461.30 L1449.30,461.30 Q1451.30,461.30 1451.30,463.30 L1451.30,578.30 Z" fill="rgba(30,190,85,0.72)"/><path d="M1424.70,578.30 L1424.70,463.30 Q1424.70,461.80 1426.20,461.80 L1449.30,461.80 Q1450.80,461.80 1450.80,463.30 L1450.80,578.30" fill="none" stroke="#22c55e" stroke-width="1"/><path d="M1424.20,578.30 L1424.20,629.70 Q1424.20,631.70 1426.20,631.70 L1449.30,631.70 Q1451.30,631.70 1451.30,629.70 L1451.30,578.30 Z" fill="rgba(236,68,68,0.75)"/><path d="M1424.70,578.30 L1424.70,629.70 Q1424.70,631.20 1426.20,631.20 L1449.30,631.20 Q1450.80,631.20 1450.80,629.70 L1450.80,578.30" fill="none" stroke="#ef4444" stroke-width="1"/><path d="M1424.20,578.30 L1424.20,516.40 Q1424.20,514.40 1426.20,514.40 L1449.30,514.40 Q1451.30,514.40 1451.30,516.40 L1451.30,578.30 Z" fill="rgba(65,132,216,0.75)"/><path d="M1424.70,578.30 L1424.70,516.40 Q1424.70,514.90 1426.20,514.90 L1449.30,514.90 Q1450.80,514.90 1450.80,516.40 L1450.80,578.30" fill="none" stroke="#3b82f6" stroke-width="1"/><path d="M1462.35,578.30 L1462.35,444.30 Q1462.35,442.30 1464.35,442.30 L1487.45,442.30 Q1489.45,442.30 1489.45,444.30 L1489.45,578.30 Z" fill="rgba(30,190,85,0.72)"/><path d="M1462.85,578.30 L1462.85,444.30 Q1462.85,442.80 1464.35,442.80 L1487.45,442.80 Q1488.95,442.80 1488.95,444.30 L1488.95,578.30" fill="none" stroke="#22c55e" stroke-width="1"/><path d="M1462.35,578.30 L1462.35,626.40 Q1462.35,628.40 1464.35,628.40 L1487.45,628.40 Q1489.45,628.40 1489.45,626.40 L1489.45,578.30 Z" fill="rgba(236,68,68,0.75)"/><path d="M1462.85,578.30 L1462.85,626.40 Q1462.85,627.90 1464.35,627.90 L1487.45,627.90 Q1488.95,627.90 1488.95,626.40 L1488.95,578.30" fill="none" stroke="#ef4444" stroke-width="1"/><path d="M1462.35,578.30 L1462.35,494.50 Q1462.35,492.50 1464.35,492.50 L1487.45,492.50 Q1489.45,492.50 1489.45,494.50 L1489.45,578.30 Z" fill="rgba(65,132,216,0.75)"/><path d="M1462.85,578.30 L1462.85,494.50 Q1462.85,493.00 1464.35,493.00 L1487.45,493.00 Q1488.95,493.00 1488.95,494.50 L1488.95,578.30" fill="none" stroke="#3b82f6" stroke-width="1"/><path d="M1500.50,578.30 L1500.50,467.30 Q1500.50,465.30 1502.50,465.30 L1525.60,465.30 Q1527.60,465.30 1527.60,467.30 L1527.60,578.30 Z" fill="rgba(30,190,85,0.72)"/><path d="M1501.00,578.30 L1501.00,467.30 Q1501.00,465.80 1502.50,465.80 L1525.60,465.80 Q1527.10,465.80 1527.10,467.30 L1527.10,578.30" fill="none" stroke="#22c55e" stroke-width="1"/><path d="M1500.50,578.30 L1500.50,622.60 Q1500.50,624.60 1502.50,624.60 L1525.60,624.60 Q1527.60,624.60 1527.60,622.60 L1527.60,578.30 Z" fill="rgba(236,68,68,0.75)"/><path d="M1501.00,578.30 L1501.00,622.60 Q1501.00,624.10 1502.50,624.10 L1525.60,624.10 Q1527.10,624.10 1527.10,622.60 L1527.10,578.30" fill="none" stroke="#ef4444" stroke-width="1"/><path d="M1500.50,578.30 L1500.50,513.80 Q1500.50,511.80 1502.50,511.80 L1525.60,511.80 Q1527.60,511.80 1527.60,513.80 L1527.60,578.30 Z" fill="rgba(65,132,216,0.75)"/><path d="M1501.00,578.30 L1501.00,513.80 Q1501.00,512.30 1502.50,512.30 L1525.60,512.30 Q1527.10,512.30 1527.10,513.80 L1527.10,578.30" fill="none" stroke="#3b82f6" stroke-width="1"/><path d="M1538.65,578.30 L1538.65,455.00 Q1538.65,453.00 1540.65,453.00 L1563.75,453.00 Q1565.75,453.00 1565.75,455.00 L1565.75,578.30 Z" fill="rgba(30,190,85,0.72)"/><path d="M1539.15,578.30 L1539.15,455.00 Q1539.15,453.50 1540.65,453.50 L1563.75,453.50 Q1565.25,453.50 1565.25,455.00 L1565.25,578.30" fill="none" stroke="#22c55e" stroke-width="1"/><path d="M1538.65,578.30 L1538.65,624.80 Q1538.65,626.80 1540.65,626.80 L1563.75,626.80 Q1565.75,626.80 1565.75,624.80 L1565.75,578.30 Z" fill="rgba(236,68,68,0.75)"/><path d="M1539.15,578.30 L1539.15,624.80 Q1539.15,626.30 1540.65,626.30 L1563.75,626.30 Q1565.25,626.30 1565.25,624.80 L1565.25,578.30" fill="none" stroke="#ef4444" stroke-width="1"/><path d="M1538.65,578.30 L1538.65,503.20 Q1538.65,501.20 1540.65,501.20 L1563.75,501.20 Q1565.75,501.20 1565.75,503.20 L1565.75,578.30 Z" fill="rgba(65,132,216,0.75)"/><path d="M1539.15,578.30 L1539.15,503.20 Q1539.15,501.70 1540.65,501.70 L1563.75,501.70 Q1565.25,501.70 1565.25,503.20 L1565.25,578.30" fill="none" stroke="#3b82f6" stroke-width="1"/><text transform="translate(407.20,678.3) rotate(-31)" x="0" y="4" text-anchor="end" class="tk">Jan 27</text><text transform="translate(445.35,678.3) rotate(-31)" x="0" y="4" text-anchor="end" class="tk">Jan 28</text><text transform="translate(483.50,678.3) rotate(-31)" x="0" y="4" text-anchor="end" class="tk">Jan 29</text><text transform="translate(521.65,678.3) rotate(-31)" x="0" y="4" text-anchor="end" class="tk">Jan 30</text><text transform="translate(559.80,678.3) rotate(-31)" x="0" y="4" text-anchor="end" class="tk">Jan 31</text><text transform="translate(597.95,678.3) rotate(-31)" x="0" y="4" text-anchor="end" class="tk">Feb 1</text><text transform="translate(636.10,678.3) rotate(-31)" x="0" y="4" text-anchor="end" class="tk">Feb 2</text><text transform="translate(674.25,678.3) rotate(-31)" x="0" y="4" text-anchor="end" class="tk">Feb 3</text><text transform="translate(712.40,678.3) rotate(-31)" x="0" y="4" text-anchor="end" class="tk">Feb 4</text><text transform="translate(750.55,678.3) rotate(-31)" x="0" y="4" text-anchor="end" class="tk">Feb 5</text><text transform="translate(788.70,678.3) rotate(-31)" x="0" y="4" text-anchor="end" class="tk">Feb 6</text><text transform="translate(826.85,678.3) rotate(-31)" x="0" y="4" text-anchor="end" class="tk">Feb 7</text><text transform="translate(865.00,678.3) rotate(-31)" x="0" y="4" text-anchor="end" class="tk">Feb 8</text><text transform="translate(903.15,678.3) rotate(-31)" x="0" y="4" text-anchor="end" class="tk">Feb 9</text><text transform="translate(941.30,678.3) rotate(-31)" x="0" y="4" text-anchor="end" class="tk">Feb 10</text><text transform="translate(979.45,678.3) rotate(-31)" x="0" y="4" text-anchor="end" class="tk">Feb 11</text><text transform="translate(1017.60,678.3) rotate(-31)" x="0" y="4" text-anchor="end" class="tk">Feb 12</text><text transform="translate(1055.75,678.3) rotate(-31)" x="0" y="4" text-anchor="end" class="tk">Feb 13</text><text transform="translate(1093.90,678.3) rotate(-31)" x="0" y="4" text-anchor="end" class="tk">Feb 14</text><text transform="translate(1132.05,678.3) rotate(-31)" x="0" y="4" text-anchor="end" class="tk">Feb 15</text><text transform="translate(1170.20,678.3) rotate(-31)" x="0" y="4" text-anchor="end" class="tk">Feb 16</text><text transform="translate(1208.35,678.3) rotate(-31)" x="0" y="4" text-anchor="end" class="tk">Feb 17</text><text transform="translate(1246.50,678.3) rotate(-31)" x="0" y="4" text-anchor="end" class="tk">Feb 18</text><text transform="translate(1284.65,678.3) rotate(-31)" x="0" y="4" text-anchor="end" class="tk">Feb 19</text><text transform="translate(1322.80,678.3) rotate(-31)" x="0" y="4" text-anchor="end" class="tk">Feb 20</text><text transform="translate(1360.95,678.3) rotate(-31)" x="0" y="4" text-anchor="end" class="tk">Feb 21</text><text transform="translate(1399.10,678.3) rotate(-31)" x="0" y="4" text-anchor="end" class="tk">Feb 22</text><text transform="translate(1437.25,678.3) rotate(-31)" x="0" y="4" text-anchor="end" class="tk">Feb 23</text><text transform="translate(1475.40,678.3) rotate(-31)" x="0" y="4" text-anchor="end" class="tk">Feb 24</text><text transform="translate(1513.55,678.3) rotate(-31)" x="0" y="4" text-anchor="end" class="tk">Feb 25</text><text transform="translate(1551.70,678.3) rotate(-31)" x="0" y="4" text-anchor="end" class="tk">Feb 26</text></svg>
</body></html>
